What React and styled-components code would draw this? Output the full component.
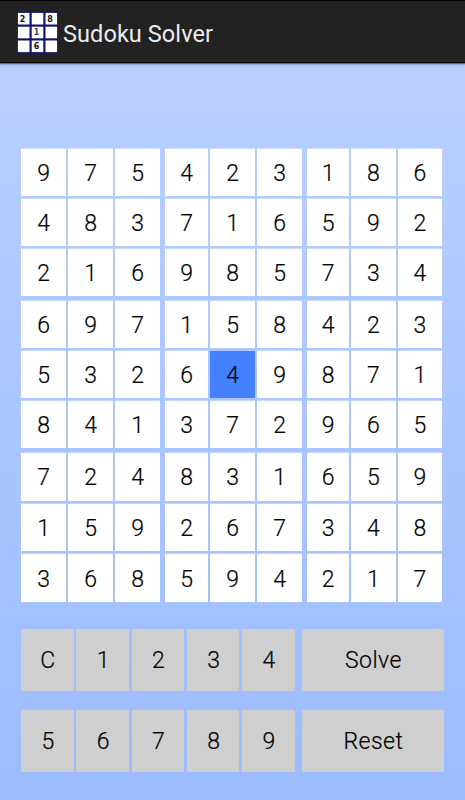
import React, { useState } from 'react';
import styled, { createGlobalStyle } from 'styled-components';

const GlobalStyle = createGlobalStyle`
  * {
    box-sizing: border-box;
  }
  body {
    margin: 0;
    font-family: Roboto, 'Liberation Sans', sans-serif;
  }
`;
const Screen = styled.div`
  display: flex;
  flex-direction: column;
  height: 800px;
  background: linear-gradient(#b9d0ff 64px, #9bbcff 800px);
`;
const Header = styled.header`
  display: flex;
  align-items: center;
  flex: none;
  height: 63px;
  padding: 2px 0 0 16.5px;
  background-color: #222;
  border-top: 1px solid #000;
  border-bottom: 1px solid #0c0a08;
  box-shadow: 0 1px 1px rgba(40, 55, 85, 0.6), 0 2px 3px rgba(60, 80, 130, 0.3);
`;
const Logo = styled.svg`
  display: block;
  width: 41px;
  height: 41px;
  font-family: 'DejaVu Sans', sans-serif;
  font-size: 8px;
  font-weight: 700;
`;
const Title = styled.h1`
  margin: 2px 0 0 5.5px;
  color: #ececec;
  font-size: 23.5px;
  font-weight: 400;
  line-height: 28px;
  letter-spacing: 0.08px;
`;
const Board = styled.div`
  display: grid;
  grid-template-columns: 139px 138px 135px;
  grid-template-rows: 147px 147px 149px;
  gap: 5px;
  margin: 86px 0 0 21px;
`;
const Box = styled.div`
  display: grid;
  grid-template-columns: ${(props) => props.$columns};
  grid-template-rows: repeat(3, 1fr);
  gap: 3px 2px;
  &:nth-child(3n) {
    margin-left: -1px;
  }
`;
const Cell = styled.div`
  display: flex;
  align-items: center;
  justify-content: center;
  padding: 2px 0 0 0.5px;
  background-color: ${(props) => (props.$selected ? '#4480ff' : '#fff')};
  box-shadow: 0 -1px 0 ${(props) => (props.$selected ? 'transparent' : 'rgba(255, 255, 255, 0.3)')};
  color: #000;
  font-size: 23px;
  font-weight: 300;
  -webkit-text-stroke: 0.2px #000;
  cursor: pointer;
`;
const Keypad = styled.div`
  display: flex;
  flex-direction: column;
  gap: 19px;
  margin: 27px 0 0 21px;
`;
const KeyRow = styled.div`
  display: grid;
  grid-template-columns: repeat(5, 52.6px) 142px;
  column-gap: 2.7px;
  height: 62px;
`;
const Key = styled.button`
  margin: 0 0 0 ${(props) => (props.$wide ? '5px' : 0)};
  width: ${(props) => (props.$wide ? '142px' : 'auto')};
  padding: 1px 0 0 ${(props) => (props.$wide ? 0 : '1px')};
  border: none;
  background-color: #cfcfcf;
  color: #000;
  font-family: inherit;
  font-size: 23px;
  font-weight: 300;
  -webkit-text-stroke: 0.2px #000;
  letter-spacing: ${(props) => (props.$wide ? '0.5px' : 0)};
`;

const SOLUTION = [
  '975423186',
  '483716592',
  '216985734',
  '697158423',
  '532649871',
  '841372965',
  '724831659',
  '159267348',
  '368594217',
];
const COLUMNS = ['45px 45px 45px', '43px 45px 45px', '42px 44.5px 44.5px'];
const THIRDS = [0, 1, 2];
const KEYS = [
  ['C', '1', '2', '3', '4', 'Solve'],
  ['5', '6', '7', '8', '9', 'Reset'],
];

const LOGO_DIGITS = [
  { value: '2', x: 5.5, y: 9.5 },
  { value: '8', x: 33, y: 9.5 },
  { value: '1', x: 19.5, y: 23 },
  { value: '6', x: 19.5, y: 36.5 },
];

const SudokuLogo = () => (
  <Logo viewBox="0 0 41 41">
    <rect width="41" height="41" fill="#10146f" />
    {THIRDS.map((row) =>
      THIRDS.map((col) => (
        <rect key={`${row}${col}`} x={0.9 + col * 13.8} y={0.9 + row * 13.8} width="11.6" height="11.6" fill="#fff" />
      ))
    )}
    {LOGO_DIGITS.map((digit) => (
      <text key={digit.value} x={digit.x} y={digit.y} textAnchor="middle" fill={digit.value === '1' ? '#245068' : '#111'}>
        {digit.value}
      </text>
    ))}
  </Logo>
);

const App = () => {
  const [selected, setSelected] = useState('4-4');

  return (
    <>
      <GlobalStyle />
      <Screen>
        <Header>
          <SudokuLogo />
          <Title>Sudoku Solver</Title>
        </Header>
        <Board>
          {THIRDS.map((band) =>
            THIRDS.map((stack) => (
              <Box key={`${band}-${stack}`} $columns={COLUMNS[stack]}>
                {THIRDS.map((r) =>
                  THIRDS.map((c) => {
                    const row = band * 3 + r;
                    const col = stack * 3 + c;
                    const id = `${row}-${col}`;
                    return (
                      <Cell key={id} $selected={selected === id} onClick={() => setSelected(id)}>
                        {SOLUTION[row][col]}
                      </Cell>
                    );
                  })
                )}
              </Box>
            ))
          )}
        </Board>
        <Keypad>
          {KEYS.map((keys) => (
            <KeyRow key={keys[0]}>
              {keys.map((label) => (
                <Key key={label} type="button" $wide={label.length > 1}>
                  {label}
                </Key>
              ))}
            </KeyRow>
          ))}
        </Keypad>
      </Screen>
    </>
  );
};

export default App;
